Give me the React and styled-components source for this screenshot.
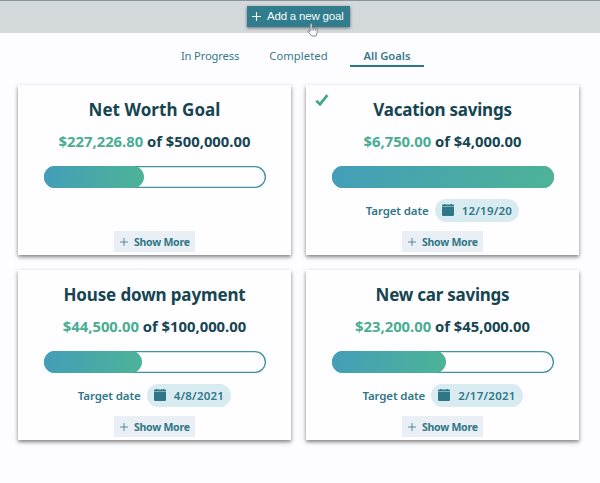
import React from "react";
import styled, { createGlobalStyle } from "styled-components";

const GlobalStyle = createGlobalStyle`
  * { box-sizing: border-box; }
  body {
    margin: 0;
    background: #fdfcfe;
    font-family: "Noto Sans", "Open Sans", sans-serif;
    color: #164552;
    overflow: hidden;
  }
  button { border: 0; padding: 0; margin: 0; font-family: inherit; }
`;

const Page = styled.div`
  height: 483px;
  overflow: hidden;
`;

const TopBar = styled.header`
  display: flex;
  justify-content: center;
  height: 33px;
  padding: 5px 3px 0 0;
  border-top: 1px solid #87969c;
  background: #d3d8db;
`;

const AddButton = styled.button`
  position: relative;
  display: flex;
  align-items: center;
  gap: 6px;
  width: 103px;
  height: 21px;
  padding-left: 5px;
  background: #327d8d;
  color: #f4fbfc;
  font: 11.5px/21px "Liberation Sans", Arial, sans-serif;
  letter-spacing: -0.2px;
  white-space: nowrap;
  box-shadow: 0 1px 3px rgba(0, 0, 0, 0.5);
`;

const Cursor = styled.svg`
  position: absolute;
  left: 60px;
  top: 17px;
`;

const Tabs = styled.nav`
  display: flex;
  gap: 14.5px;
  height: 52px;
  padding: 13px 0 0 173px;
`;

const Tab = styled.button`
  width: 74px;
  height: 21px;
  background: none;
  border-bottom: 2px solid ${(p) => (p.$active ? "#2c7788" : "transparent")};
  color: #37798a;
  font-size: 11.2px;
  line-height: 20px;
  font-weight: ${(p) => (p.$active ? 600 : 400)};
  letter-spacing: ${(p) => p.$spacing || "0"};
  white-space: nowrap;
`;

const Grid = styled.main`
  display: grid;
  grid-template-columns: 273px 273px;
  grid-auto-rows: 170px;
  gap: 15px;
  padding: 0 0 0 18px;
`;

const Card = styled.section`
  position: relative;
  display: flex;
  flex-direction: column;
  align-items: center;
  padding-top: 12px;
  background: #fefdff;
  box-shadow: 0 1.5px 4px rgba(0, 0, 0, 0.5);
`;

const CheckMark = styled.svg`
  position: absolute;
  left: 9px;
  top: 8px;
`;

const Title = styled.h2`
  height: 26px;
  margin: 0;
  font-size: 17px;
  line-height: 26px;
  font-weight: 700;
  letter-spacing: ${(p) => p.$spacing};
  white-space: nowrap;
`;

const Amount = styled.div`
  height: 24px;
  margin-top: 7px;
  font-size: 14.8px;
  line-height: 23px;
  font-weight: 700;
  letter-spacing: 0;
  white-space: nowrap;
`;

const Saved = styled.span`
  color: #49ad92;
`;

const Track = styled.div`
  width: 222px;
  height: 22px;
  margin-top: 12px;
  border-radius: 11px;
  background: #fefdff;
  box-shadow: inset 0 0 0 1.3px #4093a5;
`;

const Fill = styled.div`
  width: ${(p) => p.$width};
  height: 22px;
  border-radius: 11px;
  background: linear-gradient(100deg, #439eb8, #4db397);
`;

const DateRow = styled.div`
  display: flex;
  align-items: center;
  gap: 6px;
  height: 23px;
  margin-top: 10.6px;
  color: #2f7686;
  font-size: 11.5px;
  font-weight: 600;
  white-space: nowrap;
`;

const DateLabel = styled.span`
  letter-spacing: -0.12px;
`;

const DatePill = styled.span`
  display: flex;
  align-items: center;
  gap: 8px;
  height: 23px;
  padding: 0 7px;
  border-radius: 12px;
  background: #d8ebf1;
  letter-spacing: 0.24px;
`;

const MoreButton = styled.button`
  display: flex;
  align-items: center;
  gap: 6px;
  width: 81px;
  height: 21px;
  margin-top: auto;
  margin-bottom: 3px;
  padding-left: 6px;
  background: #e9eff4;
  color: #2f7686;
  font-size: 10.5px;
  font-weight: 700;
  letter-spacing: -0.25px;
  white-space: nowrap;
`;

const Plus = ({ size = 8, weight = 1 }) => (
  <svg width={size} height={size} viewBox="0 0 8 8" fill="none" stroke="currentColor" strokeWidth={weight}>
    <path d="M4 0v8M0 4h8" />
  </svg>
);

const CalendarIcon = () => (
  <svg width="12" height="12" viewBox="0 0 12 12" fill="currentColor">
    <path d="M0.7 0.6h1.3V0h1.4v0.6h5.2V0H10v0.6h1.3q.7 0 .7.7V2.4H0V1.3Q0 .6 .7 .6zM0 2.9h12v7.9q0 1.2-1.2 1.2H1.2Q0 12 0 10.8z" />
  </svg>
);

const goals = [
  { title: "Net Worth Goal", spacing: "0.06px", saved: "$227,226.80", total: "$500,000.00", fill: "100px" },
  { title: "Vacation savings", spacing: "-0.24px", saved: "$6,750.00", total: "$4,000.00", fill: "100%", date: "12/19/20", done: true },
  { title: "House down payment", spacing: "-0.14px", saved: "$44,500.00", total: "$100,000.00", fill: "98px", date: "4/8/2021" },
  { title: "New car savings", spacing: "-0.24px", saved: "$23,200.00", total: "$45,000.00", fill: "114px", date: "2/17/2021" },
];

const GoalCard = ({ goal }) => (
  <Card>
    {goal.done && (
      <CheckMark width="14" height="14" viewBox="0 0 14 14" fill="none" stroke="#42a98b" strokeWidth="2.8">
        <path d="M1.3 7.8L5 11.2L12.4 2.2" />
      </CheckMark>
    )}
    <Title $spacing={goal.spacing}>{goal.title}</Title>
    <Amount>
      <Saved>{goal.saved}</Saved> of {goal.total}
    </Amount>
    <Track>
      <Fill $width={goal.fill} />
    </Track>
    {goal.date && (
      <DateRow>
        <DateLabel>Target date</DateLabel>
        <DatePill>
          <CalendarIcon />
          {goal.date}
        </DatePill>
      </DateRow>
    )}
    <MoreButton>
      <Plus size={8} weight={0.8} />
      Show More
    </MoreButton>
  </Card>
);

export default function App() {
  return (
    <Page>
      <GlobalStyle />
      <TopBar>
        <AddButton>
          <Plus size={9} weight={1} />
          Add a new goal
          <Cursor width="12" height="14" viewBox="0 0 12 14" fill="#f7f9fa" stroke="#6a7378" strokeWidth="0.8" strokeLinejoin="round">
            <path d="M3.2 8.5V1.6q0-1 .9-1t.9 1V5q1.1-.6 1.7.2 1.2-.5 1.7.4 1.7-.4 1.8 1v2.8L9.2 13H4.8L1 8.7q-.5-1.1.6-1.1z" />
            <path d="M5 5v2.5M6.7 5.3v2.3M8.4 5.7v2" />
          </Cursor>
        </AddButton>
      </TopBar>
      <Tabs>
        <Tab $spacing="-0.15px">In Progress</Tab>
        <Tab $spacing="0.1px">Completed</Tab>
        <Tab $active>All Goals</Tab>
      </Tabs>
      <Grid>
        {goals.map((goal) => (
          <GoalCard key={goal.title} goal={goal} />
        ))}
      </Grid>
    </Page>
  );
}
